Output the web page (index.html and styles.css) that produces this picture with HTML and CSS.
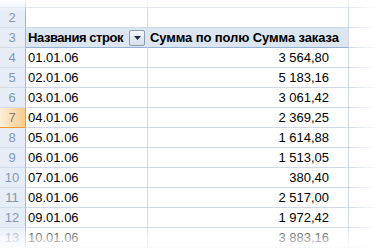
FILE: index.html
```html
<!DOCTYPE html>
<html lang="ru">
<head>
<meta charset="utf-8">
<link rel="stylesheet" href="styles.css">
</head>
<body>
<div class="sheet">
  <div class="grid">
    <div class="rh"></div><div class="c"></div><div class="c"></div><div class="c last"></div>

    <div class="rh">2</div><div class="c"></div><div class="c"></div><div class="c last"></div>

    <div class="rh">3</div>
    <div class="c hd hdA"><span class="hdtext">Названия строк</span><span class="dd"><svg width="7" height="4" viewBox="0 0 7 4"><path d="M0 0H7L3.5 4Z" fill="#1f2a44"/></svg></span></div>
    <div class="c hd hdB">Сумма по полю Сумма заказа</div>
    <div class="c last"></div>

    <div class="rh">4</div><div class="c">01.01.06</div><div class="c num">3 564,80</div><div class="c last"></div>
    <div class="rh">5</div><div class="c">02.01.06</div><div class="c num">5 183,16</div><div class="c last"></div>
    <div class="rh">6</div><div class="c">03.01.06</div><div class="c num">3 061,42</div><div class="c last"></div>
    <div class="rh sel">7</div><div class="c">04.01.06</div><div class="c num">2 369,25</div><div class="c last"></div>
    <div class="rh">8</div><div class="c">05.01.06</div><div class="c num">1 614,88</div><div class="c last"></div>
    <div class="rh">9</div><div class="c">06.01.06</div><div class="c num">1 513,05</div><div class="c last"></div>
    <div class="rh">10</div><div class="c">07.01.06</div><div class="c num">380,40</div><div class="c last"></div>
    <div class="rh">11</div><div class="c">08.01.06</div><div class="c num">2 517,00</div><div class="c last"></div>
    <div class="rh">12</div><div class="c">09.01.06</div><div class="c num">1 972,42</div><div class="c last"></div>
    <div class="rh">13</div><div class="c">10.01.06</div><div class="c num">3 883,16</div><div class="c last"></div>
  </div>
  <div class="fade-top"></div>
  <div class="fade-bottom"></div>
  <div class="fade-right"></div>
</div>
</body>
</html>
```
FILE: styles.css
```css
* { box-sizing: border-box; }
html, body { margin: 0; padding: 0; background: #fff; }
.sheet {
  position: relative;
  width: 378px;
  height: 251px;
  overflow: hidden;
  font-family: "Liberation Sans", Arial, sans-serif;
  font-size: 13px;
  color: #000;
}
.grid {
  display: grid;
  grid-template-columns: 26px 122px 201px 64px;
  grid-template-rows: 8px;
  grid-auto-rows: 20px;
}
.rh {
  background: #e6edf7;
  border-right: 1px solid #9eb6ce;
  border-bottom: 1px solid #d2dceb;
  color: #8497b0;
  text-align: center;
  line-height: 19px;
  padding-right: 1px;
}
.rh.sel {
  background: linear-gradient(to right, #fdeed8, #f9cb86);
  border-right-color: #f29536;
  border-bottom-color: #f29536;
  color: #7d7d7d;
}
.c {
  border-right: 1px solid #d0d7e5;
  border-bottom: 1px solid #d0d7e5;
  line-height: 19px;
  padding-left: 2px;
  white-space: nowrap;
  overflow: hidden;
}
.c.num { text-align: right; padding-right: 19px; }
.hd {
  background: #dce6f1;
  border-bottom-color: #95b3d7;
  font-weight: bold;
}
.hdA {
  display: flex;
  align-items: center;
  justify-content: space-between;
  padding-right: 2px;
  border-right-color: #dce6f1;
}
.hdtext { letter-spacing: -0.45px; }
.hdB { padding-left: 2px; letter-spacing: -0.1px; }
.dd {
  flex: none;
  width: 16px;
  height: 16px;
  border: 1px solid #8b9cb5;
  border-radius: 2px;
  background: linear-gradient(#f7f9fc, #d6deea);
  display: flex;
  align-items: center;
  justify-content: center;
}
.fade-top {
  position: absolute; left: 0; top: 0; width: 100%; height: 12px;
  background: linear-gradient(#fff, rgba(255,255,255,0));
}
.fade-bottom {
  position: absolute; left: 0; bottom: 0; width: 100%; height: 26px;
  background: linear-gradient(rgba(255,255,255,0), rgba(255,255,255,0.55) 45%, #fff);
}
.fade-right {
  position: absolute; right: 0; top: 0; width: 30px; height: 100%;
  background: linear-gradient(to right, rgba(255,255,255,0), #fff);
}
```
